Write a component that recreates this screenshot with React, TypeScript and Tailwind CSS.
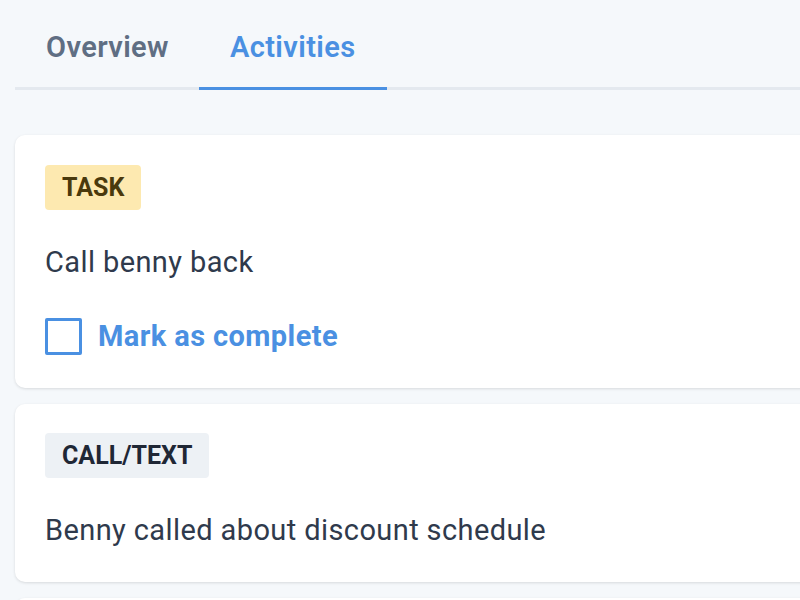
import React from "react";

export default function App() {
  return (
    <div
      className="w-[800px] h-[600px] overflow-hidden bg-[#f5f8fb]"
      style={{ fontFamily: "Roboto, 'Liberation Sans', sans-serif" }}
    >
      <div className="w-[1200px] pl-[15px]">
        {/* Tabs */}
        <div className="flex border-b-[3px] border-[#e4e9ef]">
          <div className="pl-[31px] pr-[30px] pt-[27px] pb-[20px] text-[29px] leading-[40px] tracking-[0.4px] font-semibold text-[#5f6e83]">
            Overview
          </div>
          <div className="px-[31px] pt-[27px] pb-[17px] -mb-[3px] border-b-[3px] border-[#4a90e2] text-[29px] leading-[40px] tracking-[0.4px] font-semibold text-[#4a90e2]">
            Activities
          </div>
        </div>

        {/* Cards */}
        <div className="mt-[45px] flex flex-col gap-4">
          <div className="bg-white rounded-[10px] shadow-[0_1px_3px_rgba(0,0,0,0.12)] pt-[30px] pb-[32px] px-[30px]">
            <div className="flex">
              <span className="h-[45px] flex items-center px-[17px] rounded-[4px] bg-[#fde9b0] text-[#4a390c] text-[25px] font-bold">
                TASK
              </span>
            </div>
            <div className="mt-[32px] text-[29px] leading-[40px] tracking-[0.4px] text-[#2f3a4c]">
              Call benny back
            </div>
            <div className="mt-[34px] h-[40px] flex items-center gap-[16px]">
              <span className="w-[37px] h-[37px] border-[3px] border-[#4a90e2] rounded-[2px] bg-white" />
              <span className="text-[29px] leading-[40px] tracking-[0.4px] font-bold text-[#4a90e2]">
                Mark as complete
              </span>
            </div>
          </div>

          <div className="bg-white rounded-[10px] shadow-[0_1px_3px_rgba(0,0,0,0.12)] pt-[29px] pb-[32px] px-[30px]">
            <div className="flex">
              <span className="h-[45px] flex items-center px-[17px] rounded-[4px] bg-[#edf1f5] text-[#1f2735] text-[25px] font-bold">
                CALL/TEXT
              </span>
            </div>
            <div className="mt-[32px] text-[29px] leading-[40px] tracking-[0.4px] text-[#2f3a4c]">
              Benny called about discount schedule
            </div>
          </div>

          <div className="bg-white rounded-[10px] shadow-[0_1px_3px_rgba(0,0,0,0.12)] h-[200px]" />
        </div>
      </div>
    </div>
  );
}
